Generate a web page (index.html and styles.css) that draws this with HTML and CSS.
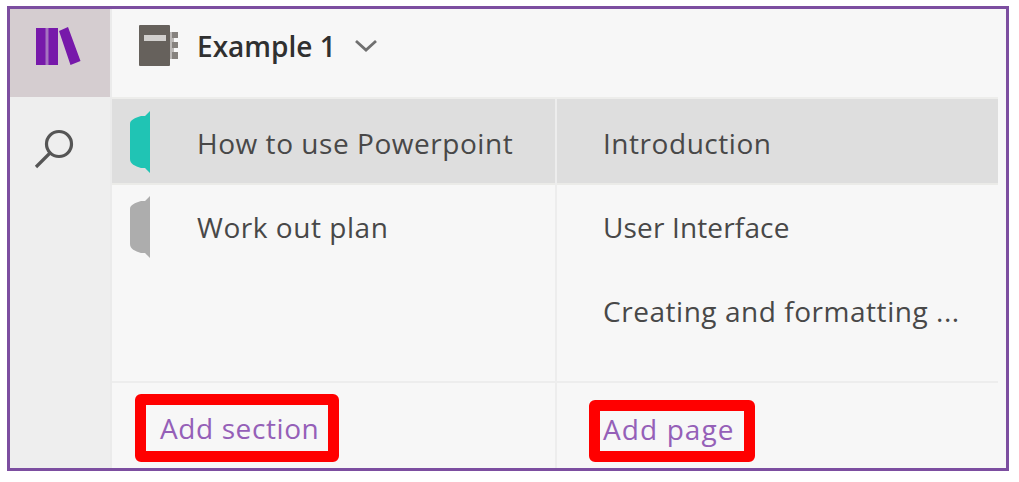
FILE: index.html
```html
<!DOCTYPE html>
<html lang="en">
<head>
<meta charset="utf-8">
<title>Example 1</title>
<link rel="stylesheet" href="styles.css">
</head>
<body>
<div class="window">
  <nav class="rail">
    <button class="rail-item active" aria-label="Notebooks">
      <svg class="books" width="46" height="40" viewBox="0 0 46 40"><path class="gap" d="M10 1h4v37h-4z"/><path d="M1 1h9.500v37H1zM13.500 1h9.500v37h-9.500zM24 4l9-4 12.500 34-10 4z"/></svg>
    </button>
    <button class="rail-item search" aria-label="Search">
      <svg width="40" height="41" viewBox="0 0 40 41"><circle cx="25" cy="15" r="12.500"/><path d="M16 24L2 38"/></svg>
    </button>
  </nav>
  <main class="panel">
    <header class="notebook">
      <svg class="book" width="40" height="42" viewBox="0 0 40 42"><rect class="cover" width="31" height="41" rx="1"/><rect class="label" x="5" y="10" width="22" height="6"/><path class="ring-bar" d="M31 7h4v27h-4z"/><path class="rings" d="M33 7h6v6h-6zM33 17h6v6h-6zM33 27h6v7h-6z"/></svg>
      <h1 class="title">Example 1</h1>
      <svg class="chevron" width="24" height="16" viewBox="0 0 24 16"><path d="M2 3l10 9L22 3"/></svg>
    </header>
    <div class="columns">
      <section class="column sections">
        <div class="row selected"><svg class="tab teal" width="20" height="62" viewBox="0 0 20 62"><path d="M20 0v62l-5-5h-4C5 55 0 53 0 48V13C0 9 5 7 11 5h4z"/></svg><span>How to use Powerpoint</span></div>
        <div class="row"><svg class="tab gray" width="20" height="62" viewBox="0 0 20 62"><path d="M20 0v62l-5-5h-4C5 55 0 53 0 48V13C0 9 5 7 11 5h4z"/></svg><span>Work out plan</span></div>
        <div class="footer"><a class="add add-section">Add section</a></div>
      </section>
      <section class="column pages">
        <div class="row selected"><span>Introduction</span></div>
        <div class="row"><span class="tight">User Interface</span></div>
        <div class="row"><span>Creating and formatting ...</span></div>
        <div class="footer"><a class="add add-page">Add page</a></div>
      </section>
    </div>
  </main>
</div>
</body>
</html>
```
FILE: styles.css
```css
* { box-sizing: border-box; }
body {
  margin: 0;
  padding: 6px 0 0 7px;
  background: #fff;
  color: #484848;
  font: 28px/40px "Open Sans", "Noto Sans", sans-serif;
}
.window {
  display: flex;
  width: 1002px;
  height: 465px;
  border: 3px solid #7c4ea0;
  background: #f7f7f7;
}
.rail {
  width: 102px;
  flex: none;
  background: #eee;
  border-right: 2px solid #ebebeb;
}
.rail-item {
  display: flex;
  width: 100%;
  height: 88px;
  padding: 0;
  border: 0;
  background: none;
}
.rail-item.active { background: #d5cdd0; padding: 18px 0 0 25px; }
.books { fill: #7719aa; }
.books .gap { fill: #a673c0; }
.rail-item.search { padding: 32px 0 0 24px; }
.search svg { fill: none; stroke: #555; stroke-width: 3.2; }
.panel { width: 886px; }
.notebook {
  display: flex;
  height: 90px;
  padding: 16px 0 0 27px;
  border-bottom: 2px solid #ededeb;
}
.book { flex: none; }
.cover { fill: #66615c; }
.label { fill: #d2d0ce; }
.ring-bar { fill: #bcb9b7; }
.rings { fill: #86827e; }
.title {
  width: 138px;
  margin: 1px 0 0 18px;
  color: #303030;
  font-size: 28px;
  font-weight: 600;
  line-height: 40px;
  white-space: nowrap;
}
.chevron { margin: 13px 0 0 19px; fill: none; stroke: #707070; stroke-width: 2.8; }
.columns { display: grid; grid-template-columns: 445px 441px; height: 369px; }
.column { display: flex; flex-direction: column; letter-spacing: 0.54px; }
.sections { border-right: 2px solid #ededed; }
.row {
  display: flex;
  align-items: center;
  height: 84px;
  white-space: nowrap;
}
.row.selected {
  height: 86px;
  padding-top: 2px;
  background: #dedede;
  border-bottom: 2px solid #ebebe8;
}
.row.selected span { padding-top: 2px; }
.sections .row { padding-left: 18px; gap: 47px; }
.pages .row { padding-left: 46px; }
.tight { letter-spacing: 0.15px; }
.tab { flex: none; }
.teal { fill: #20c4b4; }
.gray { fill: #adadad; }
.footer { margin-top: auto; height: 87px; border-top: 2px solid #ededed; }
.add {
  display: flex;
  align-items: center;
  border: 11px solid #f00;
  border-radius: 6px;
  color: #9560b8;
  white-space: nowrap;
}
.add-section { width: 204px; height: 68px; margin: 11px 0 0 23px; padding-left: 14px; letter-spacing: 0.6px; }
.add-page { width: 166px; height: 62px; margin: 17px 0 0 32px; padding: 0 0 4px 3px; line-height: 36px; letter-spacing: 1.1px; }
```
